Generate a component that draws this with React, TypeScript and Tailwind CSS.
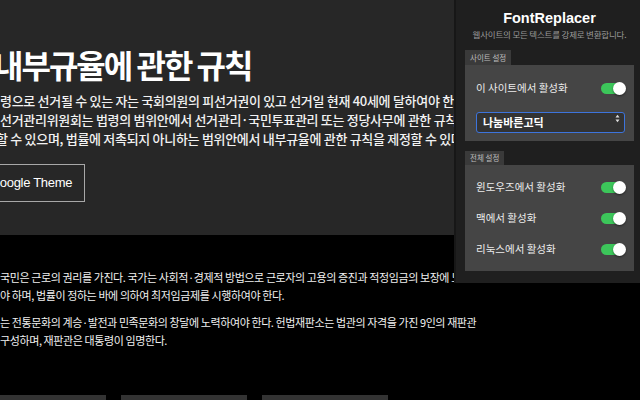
import React, { useState } from 'react';

const kr = "font-['Noto_Sans_CJK_KR','Noto_Sans',sans-serif]";

const Toggle: React.FC<{ on: boolean; onChange: () => void }> = ({ on, onChange }) => (
  <button
    type="button"
    onClick={onChange}
    className={`relative w-[24px] h-[11px] rounded-full ${on ? 'bg-[#3cc65a]' : 'bg-[#666]'}`}
    aria-pressed={on}
  >
    <span
      className={`absolute top-[-1px] w-[13px] h-[13px] rounded-full bg-white shadow-[0_1px_2px_rgba(0,0,0,0.5)] ${on ? 'right-[-1px]' : 'left-[-1px]'}`}
    />
  </button>
);

const Row: React.FC<{ label: string; on: boolean; onChange: () => void }> = ({ label, on, onChange }) => (
  <div className="h-[18px] flex items-center justify-between">
    <span className="text-[10.5px] text-[#ececec]">{label}</span>
    <Toggle on={on} onChange={onChange} />
  </div>
);

const Popup: React.FC = () => {
  const [site, setSite] = useState(true);
  const [win, setWin] = useState(true);
  const [mac, setMac] = useState(true);
  const [linux, setLinux] = useState(true);
  const [font, setFont] = useState('나눔바른고딕');

  return (
    <div className={`absolute top-0 right-0 w-[186px] h-[283px] bg-[#1f1f1f] border-l-2 border-[#171717] pl-[9px] pr-[6px] pt-[8px] ${kr}`}>
      <h1 className="text-center text-[14.5px] leading-[20px] font-bold text-white font-['Liberation_Sans',sans-serif]">FontReplacer</h1>
      <p className="mt-[1px] text-center text-[8.5px] leading-[10px] text-[#9a9a9a] tracking-[-0.2px] whitespace-nowrap">웹사이트의 모든 텍스트를 강제로 변환합니다.</p>

      <div className="mt-[11px]">
        <div className="flex w-fit items-center h-[15px] px-[5px] bg-[#3a3a3a] text-[7.5px] leading-none text-[#bdbdbd]">사이트 설정</div>
        <div className="bg-[#454545] pl-[11px] pr-[9px] pt-[14px] pb-[12px]">
          <Row label="이 사이트에서 활성화" on={site} onChange={() => setSite(!site)} />
          <div className="relative mt-[11px] h-[21px]">
            <select
              value={font}
              onChange={e => setFont(e.target.value)}
              className="appearance-none w-full h-full rounded-[3px] border-[1.5px] border-[#3d74dc] bg-[#333] pl-[6px] text-[11px] font-bold text-white outline-none"
            >
              <option>나눔바른고딕</option>
              <option>나눔고딕</option>
              <option>맑은 고딕</option>
            </select>
            <svg className="absolute right-[5px] top-[6px] pointer-events-none" width="5" height="9" viewBox="0 0 5 9">
              <path d="M0.5 3.5 L2.5 0.8 L4.5 3.5 Z" fill="#ddd" />
              <path d="M0.5 5.5 L2.5 8.2 L4.5 5.5 Z" fill="#ddd" />
            </svg>
          </div>
        </div>
      </div>

      <div className="mt-[10px]">
        <div className="flex w-fit items-center h-[14px] px-[5px] bg-[#3a3a3a] text-[7.5px] leading-none text-[#bdbdbd]">전체 설정</div>
        <div className="bg-[#454545] pl-[11px] pr-[9px] pt-[13px] pb-[13px] flex flex-col gap-[13px]">
          <Row label="윈도우즈에서 활성화" on={win} onChange={() => setWin(!win)} />
          <Row label="맥에서 활성화" on={mac} onChange={() => setMac(!mac)} />
          <Row label="리눅스에서 활성화" on={linux} onChange={() => setLinux(!linux)} />
        </div>
      </div>
    </div>
  );
};

export default function App() {
  return (
    <div className={`relative w-[640px] h-[400px] overflow-hidden bg-black ${kr}`}>
      <section className="h-[235px] bg-[#272727] pt-[45px] text-[#f2f2f2] whitespace-nowrap overflow-hidden">
        <h2 className="ml-[-6px] text-[32px] leading-[38px] font-bold tracking-[-2px] text-white">내부규율에 관한 규칙</h2>
        <div className="mt-[8px] text-[13px] leading-[19px] tracking-[-0.3px] font-medium">
          <p>령으로 선거될 수 있는 자는 국회의원의 피선거권이 있고 선거일 현재 40세에 달하여야 한다.</p>
          <p>선거관리위원회는 법령의 범위안에서 선거관리·국민투표관리 또는 정당사무에 관한 규칙을 제정할 수 있다.</p>
          <p className="ml-[-4px]">할 수 있으며, 법률에 저촉되지 아니하는 범위안에서 내부규율에 관한 규칙을 제정할 수 있다.</p>
        </div>
        <button className="mt-[16px] ml-[-14px] h-[38px] pl-[3px] pr-[12px] border border-[#a8a8a8] text-[13px] tracking-[-0.3px] text-white font-['Liberation_Sans',sans-serif]">
          Google Theme
        </button>
      </section>

      <section className="pt-[33px] text-[11px] leading-[18px] tracking-[-0.4px] text-[#f0f0f0] whitespace-nowrap">
        <p>국민은 근로의 권리를 가진다. 국가는 사회적·경제적 방법으로 근로자의 고용의 증진과 적정임금의 보장에 노력하여야</p>
        <p>야 하며, 법률이 정하는 바에 의하여 최저임금제를 시행하여야 한다.</p>
        <p className="mt-[9px]">는 전통문화의 계승·발전과 민족문화의 창달에 노력하여야 한다. 헌법재판소는 법관의 자격을 가진 9인의 재판관</p>
        <p>구성하며, 재판관은 대통령이 임명한다.</p>
        <div className="mt-[46px] flex gap-[15px]">
          <div className="w-[106px] h-[20px] bg-[#333]" />
          <div className="w-[126px] h-[20px] bg-[#333]" />
          <div className="w-[126px] h-[20px] bg-[#333]" />
        </div>
      </section>

      <Popup />
    </div>
  );
}
